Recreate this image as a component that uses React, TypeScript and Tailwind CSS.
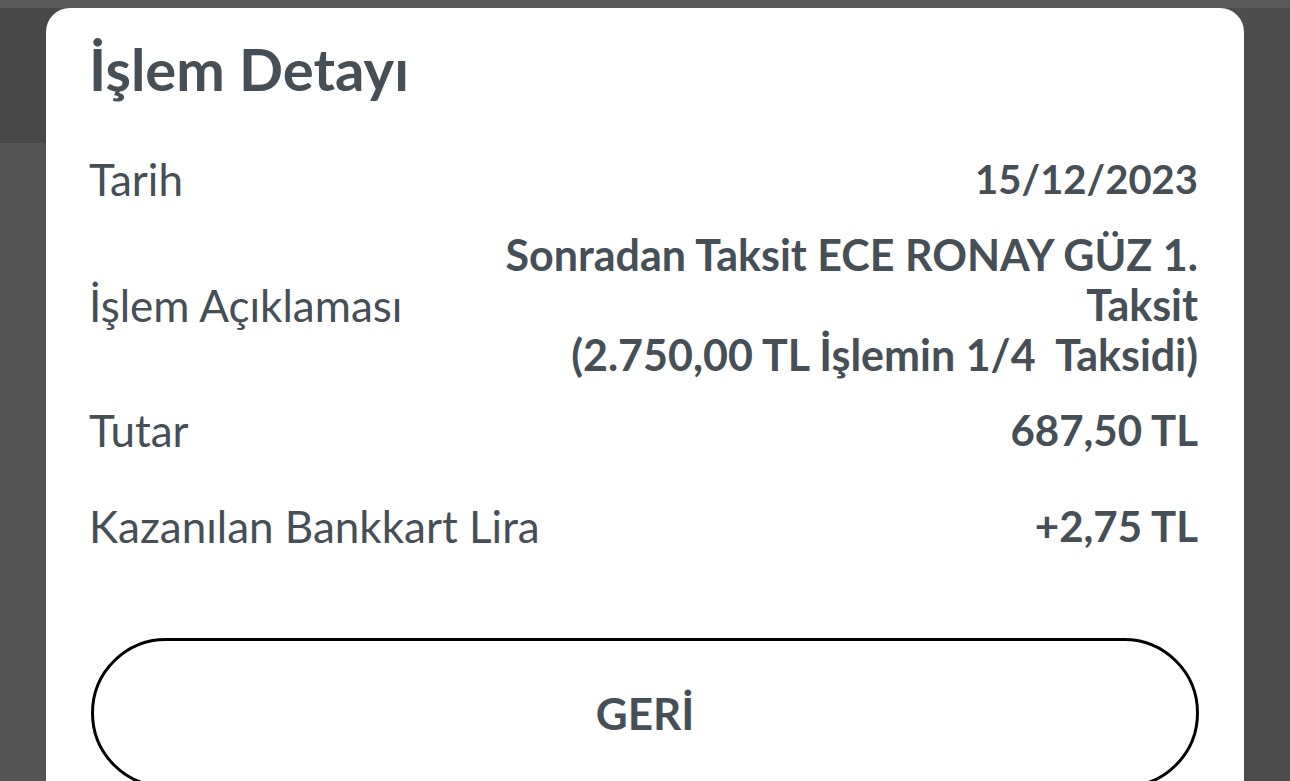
import React from "react";

const font = { fontFamily: "Lato, 'Noto Sans', sans-serif" };

function Row({ label, children, valueClass }: { label: string; children: React.ReactNode; valueClass: string }) {
  return (
    <div className="flex items-center justify-between">
      <div className="text-[44px] leading-[50px] font-normal text-[#464f55] whitespace-nowrap">{label}</div>
      <div className={`${valueClass} font-bold text-[#464f55] text-right`}>{children}</div>
    </div>
  );
}

export default function App() {
  return (
    <div className="relative w-[1290px] h-[781px] overflow-hidden bg-[#4d4d4d]" style={font}>
      <div className="absolute left-0 top-0 w-full h-[8px] bg-[#595959]" />
      <div className="absolute left-0 top-[8px] w-[60px] h-[135px] bg-[#484848] rounded-br-[16px]" />
      <div className="absolute left-0 top-[143px] w-[46px] h-[640px] bg-[#545454]" />
      <div className="absolute right-0 top-[8px] w-[46px] h-[773px] bg-[#4c4c4c]" />
      <div className="relative mx-[46px] mt-[8px] h-[800px] bg-white rounded-[24px] pl-[43px] pr-[46px] pt-[26px] flex flex-col">
        <h1 className="text-[58px] leading-[70px] font-bold text-[#464f55]">İşlem Detayı</h1>
        <div className="mt-[50px] flex flex-col">
          <Row label="Tarih" valueClass="text-[40px] leading-[50px]">
            15/12/2023
          </Row>
          <div className="mt-[26px]">
            <Row label="İşlem Açıklaması" valueClass="text-[43px] leading-[50px] whitespace-pre">
              {"Sonradan Taksit ECE RONAY GÜZ 1.\nTaksit\n(2.750,00 TL İşlemin 1/4  Taksidi)"}
            </Row>
          </div>
          <div className="mt-[25px]">
            <Row label="Tutar" valueClass="text-[42px] leading-[50px]">
              687,50 TL
            </Row>
          </div>
          <div className="mt-[46px]">
            <Row label="Kazanılan Bankkart Lira" valueClass="text-[42px] leading-[50px]">
              +2,75 TL
            </Row>
          </div>
        </div>
        <button className="mt-[87px] w-[1108px] ml-[2px] h-[150px] shrink-0 rounded-full border-[3px] border-black bg-white text-[44px] leading-[50px] font-bold text-[#464f55] flex items-center justify-center">
          GERİ
        </button>
      </div>
    </div>
  );
}
